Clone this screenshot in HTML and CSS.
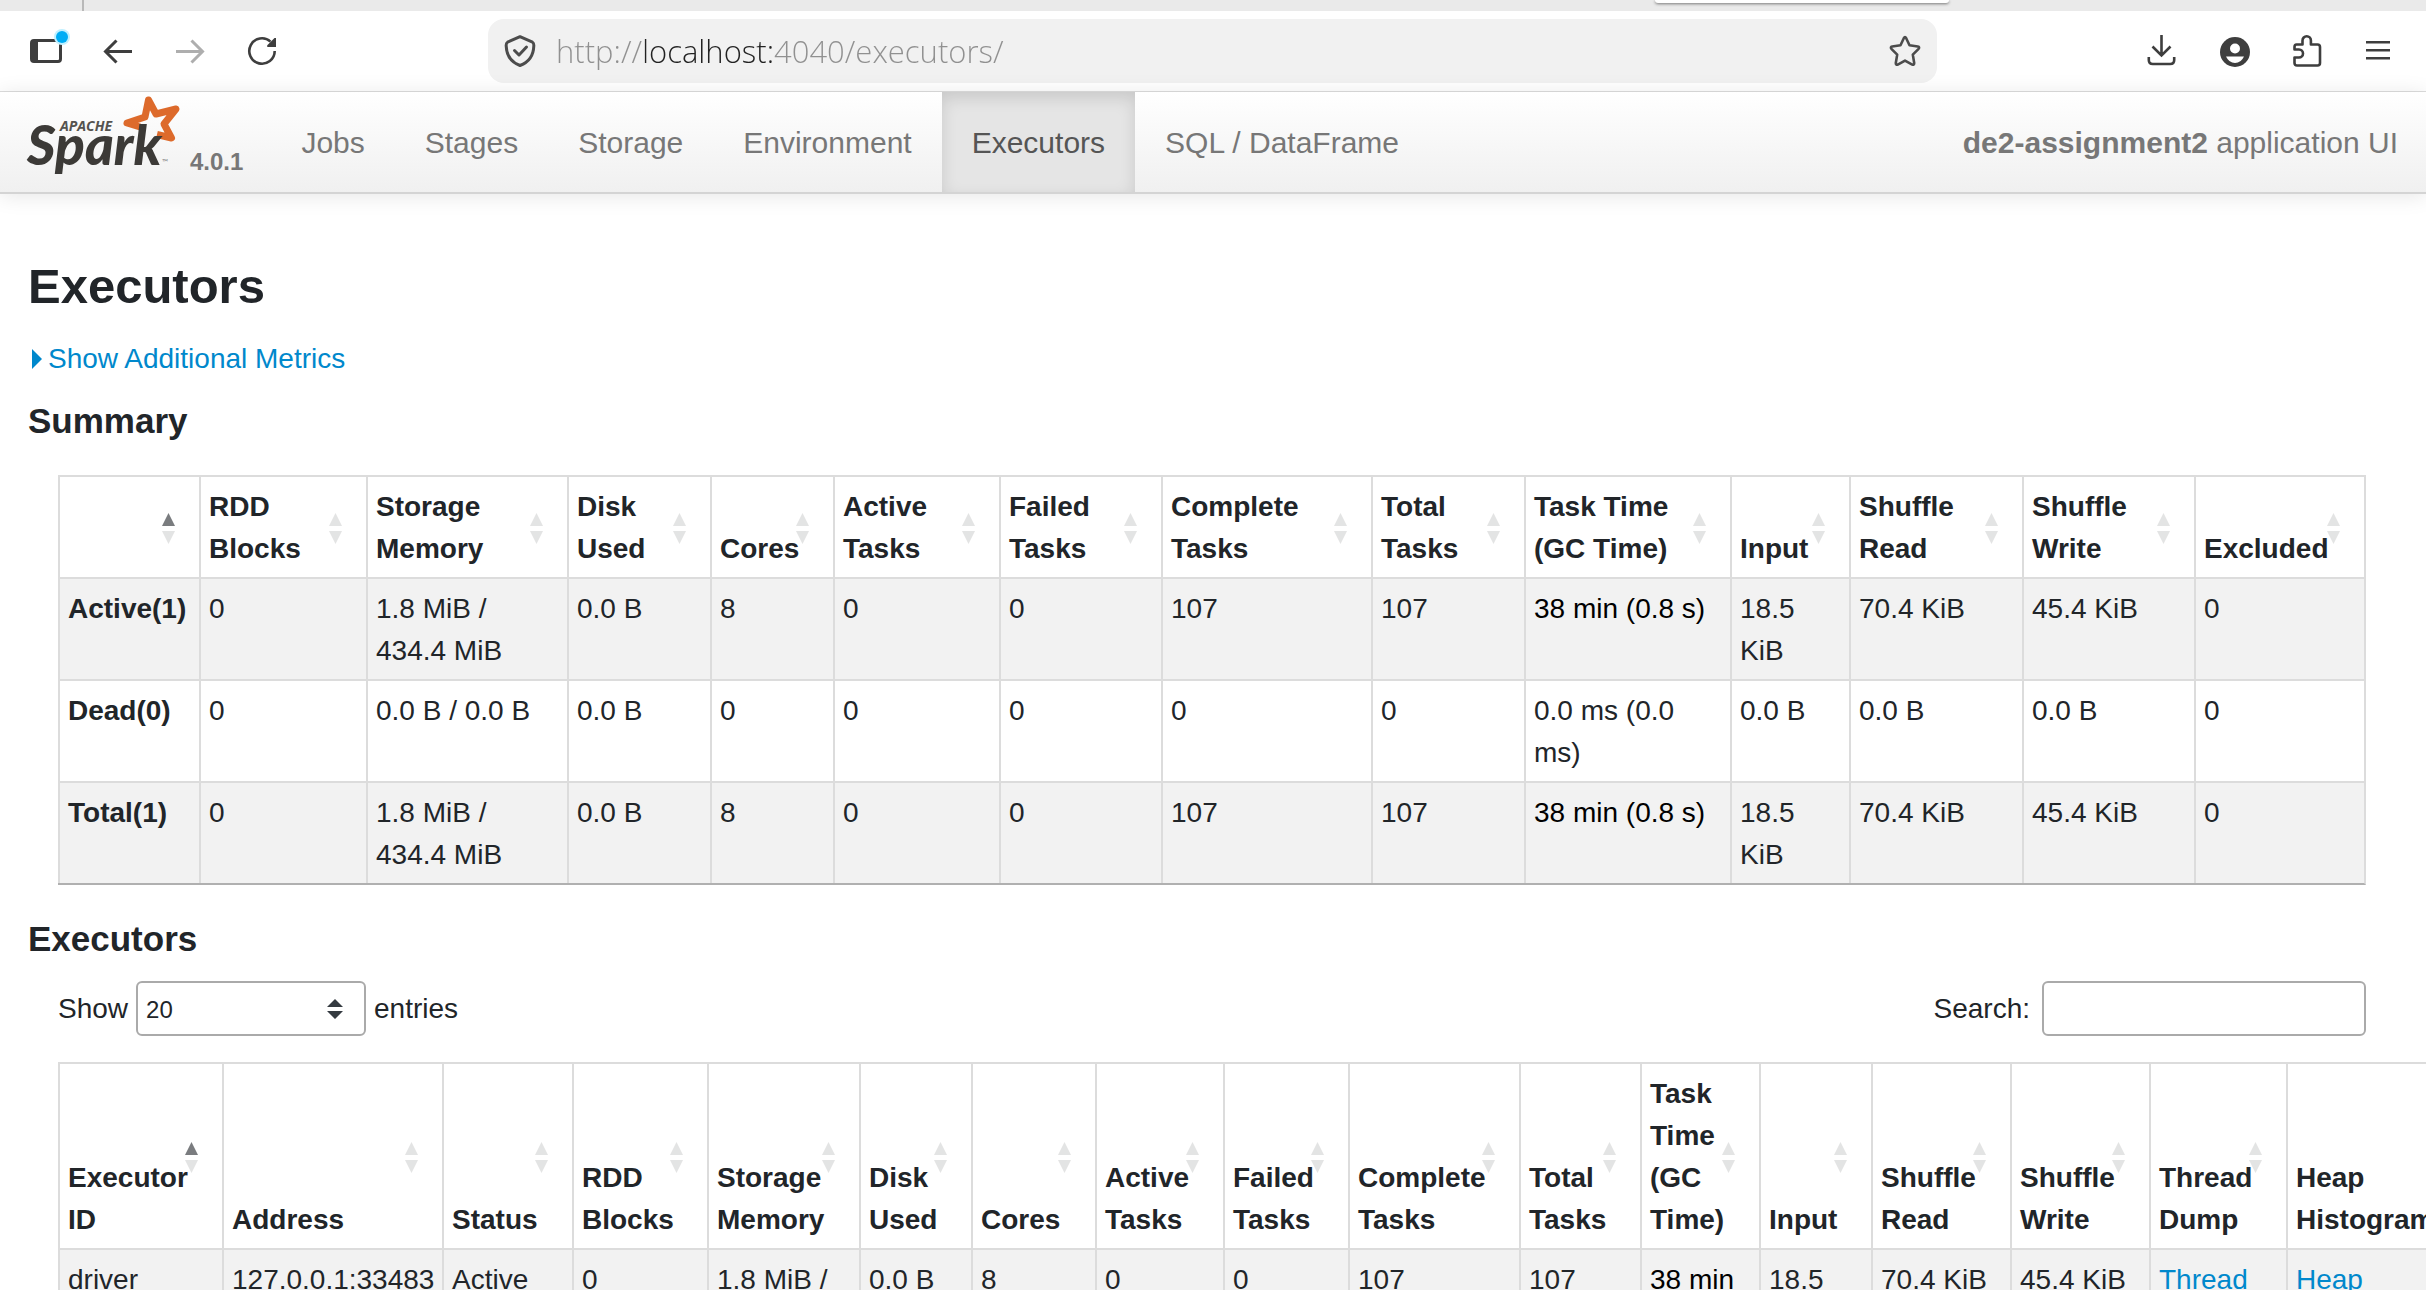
FILE: index.html
```html
<!DOCTYPE html>
<html lang="en">
<head>
<meta charset="utf-8">
<title>de2-assignment2 - Executors</title>
<link rel="stylesheet" href="styles.css">
</head>
<body>
<div class="window">
  <div class="tabstrip">
    <div class="tab-pinned"></div>
    <div class="tab-space"></div>
    <div class="tab-active"></div>
  </div>

  <div class="toolbar">
    <div class="tools tools-left">
      <button class="tool" aria-label="Sidebar">
        <svg viewBox="0 0 32 32"><rect x="1.5" y="5.5" width="29" height="21" rx="2.5" fill="none" stroke="currentColor" stroke-width="3"/><path d="M2 6h6v20H2z" fill="currentColor"/></svg>
        <span class="dot"></span>
      </button>
      <button class="tool" aria-label="Back">
        <svg viewBox="0 0 32 32" fill="none" stroke="currentColor" stroke-width="3"><path d="M30 16.500H4M14.500 5.500L3.500 16.500L14.500 27.500"/></svg>
      </button>
      <button class="tool" aria-label="Forward" disabled>
        <svg viewBox="0 0 32 32" fill="none" stroke="currentColor" stroke-width="3"><path d="M2 16.500H28M17.500 5.500L28.500 16.500L17.500 27.500"/></svg>
      </button>
      <button class="tool" aria-label="Reload">
        <svg viewBox="0 0 32 32"><path d="M28.700 16A12.700 12.700 0 1 1 24.500 6.600" fill="none" stroke="currentColor" stroke-width="2.600"/><path d="M30 3v9h-8.500q-1-1 0-2l7-7z" fill="currentColor"/></svg>
      </button>
    </div>
    <div class="address">
      <svg class="icon" viewBox="0 0 32 32" fill="none" stroke="currentColor" stroke-width="3" stroke-linejoin="round"><path d="M16 1.700L28.500 7.200Q30 8 29.800 11C29.500 20 25.500 27 16 30.500C6.500 27 2.500 20 2.200 11Q2 8 3.500 7.200Z"/><path d="M10.500 15.500l4.500 4.500l7.500-8" stroke-linecap="round"/></svg>
      <input class="url" type="text" aria-label="Address" value="http://localhost:4040/executors/">
      <button class="tool" aria-label="Bookmark this page">
        <svg viewBox="0 0 32 32" fill="none" stroke="currentColor" stroke-width="2.600" stroke-linejoin="round"><path d="M14.800 3.200Q16 1 17.200 3.200L20.500 10.300L28.800 11.500Q31 12 29.600 13.800L23.800 19.600L25.200 28Q25.300 30.300 23.200 29.600L16 25.600L8.800 29.600Q6.700 30.300 6.800 28L8.200 19.600L2.400 13.800Q1 12 3.200 11.500L11.500 10.300Z"/></svg>
      </button>
    </div>
    <div class="tools tools-right">
      <button class="tool" aria-label="Downloads">
        <svg viewBox="0 0 32 32" fill="none" stroke="currentColor" stroke-width="2.600"><path d="M15.500 0v20M6.500 11.500l9 9l9-9M2.800 22v3q0 4 4 4h17.400q4 0 4-4v-3"/></svg>
      </button>
      <button class="tool" aria-label="Account">
        <svg viewBox="0 0 32 32"><circle cx="17" cy="17" r="15" fill="currentColor"/><circle cx="17" cy="13.500" r="5" fill="#fff"/><path d="M8 21.500h18q-3 6.500-9 6.500t-9-6.500z" fill="#fff"/></svg>
      </button>
      <button class="tool" aria-label="Extensions">
        <svg viewBox="0 0 32 32" fill="none" stroke="currentColor" stroke-width="2.600" stroke-linejoin="round"><path d="M6.500 9.500h6V5.500a4.200 4.200 0 0 1 8.400 0v4H27.500q2.500 0 2.500 2.500v16q0 2.500-2.500 2.500H7Q4.500 30.500 4.500 28v-5.500H9a4 4 0 0 0 0-8H4.500V12q0-2.500 2-2.500z"/></svg>
      </button>
      <button class="tool" aria-label="Menu">
        <svg viewBox="0 0 32 32" fill="none" stroke="currentColor" stroke-width="2.600"><path d="M4 7.300h24M4 15.300h24M4 23.300h24"/></svg>
      </button>
    </div>
  </div>

  <nav class="navbar">
    <a class="brand" href="#" aria-label="Apache Spark 4.0.1">
      <svg class="logo" viewBox="0 0 154 100">
        <g fill="none" stroke="#dd6a2b" stroke-width="7" stroke-linejoin="round">
          <path d="M114 35L101 31L119 25L122.500 8L130 22L150 17L138 32L145.500 46L131 42.500"/>
        </g>
        <text class="logo-small" x="34" y="39">APACHE</text>
        <text class="logo-main" x="1" y="73">Spark</text>
        <text class="logo-tm" x="136" y="73">™</text>
      </svg>
      <span class="version">4.0.1</span>
    </a>
    <a class="nav-link" href="#">Jobs</a>
    <a class="nav-link" href="#">Stages</a>
    <a class="nav-link" href="#">Storage</a>
    <a class="nav-link" href="#">Environment</a>
    <a class="nav-link active" href="#">Executors</a>
    <a class="nav-link" href="#">SQL / DataFrame</a>
    <span class="app-name"><strong>de2-assignment2</strong> application UI</span>
  </nav>

  <main class="content">
    <h1>Executors</h1>
    <a class="metrics" href="#"><svg viewBox="0 0 10 20"><path d="M0 0L10 10L0 20z" fill="currentColor"/></svg>Show Additional Metrics</a>
    <h2>Summary</h2>
    <div class="table-wrap">
      <table class="summary">
        <thead>
          <tr>
            <th class="sorted"><button class="sort" aria-label="Sort by state"></button></th>
            <th><button class="sort">RDD Blocks</button></th>
            <th><button class="sort">Storage Memory</button></th>
            <th><button class="sort">Disk Used</button></th>
            <th><button class="sort">Cores</button></th>
            <th><button class="sort">Active Tasks</button></th>
            <th><button class="sort">Failed Tasks</button></th>
            <th><button class="sort">Complete Tasks</button></th>
            <th><button class="sort">Total Tasks</button></th>
            <th><button class="sort">Task Time (GC Time)</button></th>
            <th><button class="sort">Input</button></th>
            <th><button class="sort">Shuffle Read</button></th>
            <th><button class="sort">Shuffle Write</button></th>
            <th><button class="sort">Excluded</button></th>
          </tr>
        </thead>
        <tbody>
          <tr>
            <th scope="row">Active(1)</th><td>0</td><td>1.8 MiB / 434.4 MiB</td><td>0.0 B</td><td>8</td><td>0</td><td>0</td><td>107</td><td>107</td><td class="time">38 min (0.8 s)</td><td>18.5 KiB</td><td>70.4 KiB</td><td>45.4 KiB</td><td>0</td>
          </tr>
          <tr>
            <th scope="row">Dead(0)</th><td>0</td><td>0.0 B / 0.0 B</td><td>0.0 B</td><td>0</td><td>0</td><td>0</td><td>0</td><td>0</td><td>0.0 ms (0.0 ms)</td><td>0.0 B</td><td>0.0 B</td><td>0.0 B</td><td>0</td>
          </tr>
          <tr>
            <th scope="row">Total(1)</th><td>0</td><td>1.8 MiB / 434.4 MiB</td><td>0.0 B</td><td>8</td><td>0</td><td>0</td><td>107</td><td>107</td><td class="time">38 min (0.8 s)</td><td>18.5 KiB</td><td>70.4 KiB</td><td>45.4 KiB</td><td>0</td>
          </tr>
        </tbody>
      </table>
    </div>

    <h2>Executors</h2>
    <div class="table-wrap">
      <div class="controls">
        <label class="length">Show
          <select>
            <option>20</option>
            <option>40</option>
            <option>60</option>
            <option>100</option>
            <option>All</option>
          </select>
          entries</label>
        <label class="search">Search: <input type="search"></label>
      </div>
      <table class="executors">
        <thead>
          <tr>
            <th class="sorted"><button class="sort">Executor ID</button></th>
            <th><button class="sort">Address</button></th>
            <th><button class="sort">Status</button></th>
            <th><button class="sort">RDD Blocks</button></th>
            <th><button class="sort">Storage Memory</button></th>
            <th><button class="sort">Disk Used</button></th>
            <th><button class="sort">Cores</button></th>
            <th><button class="sort">Active Tasks</button></th>
            <th><button class="sort">Failed Tasks</button></th>
            <th><button class="sort">Complete Tasks</button></th>
            <th><button class="sort">Total Tasks</button></th>
            <th><button class="sort">Task Time (GC Time)</button></th>
            <th><button class="sort">Input</button></th>
            <th><button class="sort">Shuffle Read</button></th>
            <th><button class="sort">Shuffle Write</button></th>
            <th><button class="sort">Thread Dump</button></th>
            <th><button class="sort">Heap Histogram</button></th>
          </tr>
        </thead>
        <tbody>
          <tr>
            <td>driver</td><td class="host">127.0.0.1:33483</td><td>Active</td><td>0</td><td>1.8 MiB / 434.4 MiB</td><td>0.0 B</td><td>8</td><td>0</td><td>0</td><td>107</td><td>107</td><td class="time">38 min (0.8 s)</td><td>18.5 KiB</td><td>70.4 KiB</td><td>45.4 KiB</td><td><a href="#">Thread Dump</a></td><td><a href="#">Heap Histogram</a></td>
          </tr>
        </tbody>
      </table>
    </div>
  </main>
</div>
</body>
</html>
```
FILE: styles.css
```css
* { box-sizing: border-box; }

body {
  margin: 0;
  background: #fff;
  color: #212529;
  font: 28px/42px "Liberation Sans", Arial, sans-serif;
}

a { color: #08c; text-decoration: none; }

button {
  padding: 0;
  border: 0;
  background: none;
  color: inherit;
  font: inherit;
}

.window {
  display: flex;
  flex-direction: column;
  height: 100vh;
  overflow: hidden;
}

/* Browser chrome */
.tabstrip {
  flex: none;
  display: flex;
  height: 11px;
  overflow: hidden;
  background: #eaeaea;
}
.tab-pinned { width: 84px; border-right: 2px solid #b9b9b9; }
.tab-space { width: 1571px; }
.tab-active {
  width: 294px;
  height: 3px;
  border-radius: 0 0 8px 8px;
  background: #fff;
  box-shadow: 0 1px 3px rgba(0, 0, 0, .5);
}

.toolbar {
  flex: none;
  display: grid;
  grid-template-columns: 488px 1fr 489px;
  align-items: center;
  height: 81px;
  border-bottom: 1px solid #ddd;
  color: #3e3e3e;
}
.tools { display: flex; gap: 40px; }
.tools-left { padding-left: 30px; }
.tools-right { justify-content: flex-end; padding-right: 32px; }
.tool { position: relative; flex: none; width: 32px; height: 32px; }
.tool svg { display: block; width: 32px; height: 32px; }
.tool:disabled { color: #aeaeae; }
.dot {
  position: absolute;
  top: -4px;
  right: -6px;
  width: 12px;
  height: 12px;
  border-radius: 50%;
  background: #00adf5;
  box-shadow: 0 0 0 2px #c0f0ff;
}

.address {
  display: flex;
  align-items: center;
  height: 64px;
  padding: 0 16px;
  border-radius: 16px;
  background: #f1f1f1;
  color: #4c4c4c;
}
.icon { flex: none; width: 32px; height: 32px; }
.url {
  flex: 1;
  min-width: 0;
  height: 48px;
  margin-left: 20px;
  padding: 0;
  border: 0;
  outline: 0;
  background: linear-gradient(to right, #909090 89px, #222 89px, #222 218px, #909090 218px);
  background-clip: text;
  -webkit-background-clip: text;
  color: transparent;
  font: 300 31px/40px "Open Sans", "Noto Sans", sans-serif;
}

/* Application navigation */
.navbar {
  position: relative;
  flex: none;
  display: flex;
  height: 102px;
  padding-right: 28px;
  border-bottom: 2px solid #d4d4d4;
  background: linear-gradient(#fff, #f0f0f0);
  box-shadow: 0 2px 20px rgba(0, 0, 0, .1);
  color: #777;
  font-size: 30px;
  line-height: 102px;
}
.brand {
  display: flex;
  gap: 10px;
  margin-right: 28px;
  padding-left: 26px;
  color: #777;
}
.logo { width: 154px; height: 100px; }
.logo-main { font: italic 900 55px Lato, sans-serif; fill: #3c3a37; }
.logo-small { font: italic 700 14px "Open Sans", sans-serif; fill: #55534f; }
.logo-tm { font: 8px Lato, sans-serif; fill: #888; }
.version {
  padding-top: 50px;
  font-size: 24px;
  font-weight: bold;
  line-height: 40px;
}
.nav-link { padding: 0 30px; color: #777; }
.nav-link.active {
  background: #e5e5e5;
  box-shadow: inset 0 6px 16px rgba(0, 0, 0, .125);
  color: #555;
}
.app-name { margin-left: auto; }

/* Page content */
.content {
  flex: 1;
  min-height: 0;
  overflow: hidden;
  padding: 62px 30px 0 28px;
}
h1 { margin: 0 0 22px; font-size: 49px; line-height: 60px; }
h2 { margin: 20px 0 21px; font-size: 35px; line-height: 42px; }
.metrics { display: flex; align-items: center; gap: 6px; padding-left: 4px; }
.metrics svg { width: 10px; height: 20px; }
.table-wrap { padding: 0 30px; }
.summary { margin: 33px 0; }

table {
  width: 100%;
  table-layout: fixed;
  border-collapse: separate;
  border-spacing: 0;
  border-right: 2px solid #dcdcdc;
  border-bottom: 2px solid #b0b0b0;
}
th, td {
  padding: 9px 8px 7px;
  border-top: 2px solid #dcdcdc;
  border-left: 2px solid #dcdcdc;
  text-align: left;
  vertical-align: top;
}
tbody tr:nth-child(odd) { background: #f2f2f2; }
thead th { position: relative; vertical-align: bottom; }
.sort { display: block; width: 100%; text-align: left; }
.time { color: #000; }
.host { white-space: nowrap; }

/* Sort direction marks */
thead th::before, thead th::after {
  content: "";
  position: absolute;
  right: 24px;
  width: 13px;
  height: 13px;
  background: #e3e4e4;
}
thead th::before {
  top: calc(50% - 14px);
  clip-path: polygon(50% 0, 100% 100%, 0 100%);
}
thead th::after {
  top: calc(50% + 4px);
  clip-path: polygon(0 0, 100% 0, 50% 100%);
}
thead .sorted::before { background: #7a7c7f; }

.summary th:nth-child(1) { width: 141px; }
.summary th:nth-child(2) { width: 167px; }
.summary th:nth-child(3) { width: 201px; }
.summary th:nth-child(4) { width: 143px; }
.summary th:nth-child(5) { width: 123px; }
.summary th:nth-child(6) { width: 166px; }
.summary th:nth-child(7) { width: 162px; }
.summary th:nth-child(8) { width: 210px; }
.summary th:nth-child(9) { width: 153px; }
.summary th:nth-child(10) { width: 206px; }
.summary th:nth-child(11) { width: 119px; }
.summary th:nth-child(12) { width: 173px; }
.summary th:nth-child(13) { width: 172px; }
.summary th:nth-child(14) { width: 170px; }

.executors th:nth-child(1) { width: 164px; }
.executors th:nth-child(2) { width: 220px; }
.executors th:nth-child(3) { width: 130px; }
.executors th:nth-child(4) { width: 135px; }
.executors th:nth-child(5) { width: 152px; }
.executors th:nth-child(6) { width: 112px; }
.executors th:nth-child(7) { width: 124px; }
.executors th:nth-child(8) { width: 128px; }
.executors th:nth-child(9) { width: 125px; }
.executors th:nth-child(10) { width: 171px; }
.executors th:nth-child(11) { width: 121px; }
.executors th:nth-child(12) { width: 119px; }
.executors th:nth-child(13) { width: 112px; }
.executors th:nth-child(14) { width: 139px; }
.executors th:nth-child(15) { width: 139px; }
.executors th:nth-child(16) { width: 137px; }
.executors th:nth-child(17) { width: 180px; }

/* Table controls */
.controls {
  display: flex;
  justify-content: space-between;
  margin-bottom: 26px;
}
.length, .search { display: flex; align-items: center; gap: 8px; line-height: 40px; }
.search { gap: 12px; }
select, .search input {
  height: 55px;
  border: 2px solid #aaa;
  border-radius: 6px;
  background-color: #fff;
  color: inherit;
  font: 24px/36px "Liberation Sans", Arial, sans-serif;
}
select {
  appearance: none;
  width: 230px;
  padding: 2px 48px 0 8px;
  background-image: url("data:image/svg+xml,%3Csvg xmlns='http://www.w3.org/2000/svg' viewBox='0 0 16 20'%3E%3Cpath fill='%23343a40' d='M8 0l8 8H0zM0 12h16l-8 8z'/%3E%3C/svg%3E");
  background-position: right 21px center;
  background-repeat: no-repeat;
  background-size: 16px 20px;
}
.search input { appearance: none; width: 324px; padding: 0 8px; }
```
